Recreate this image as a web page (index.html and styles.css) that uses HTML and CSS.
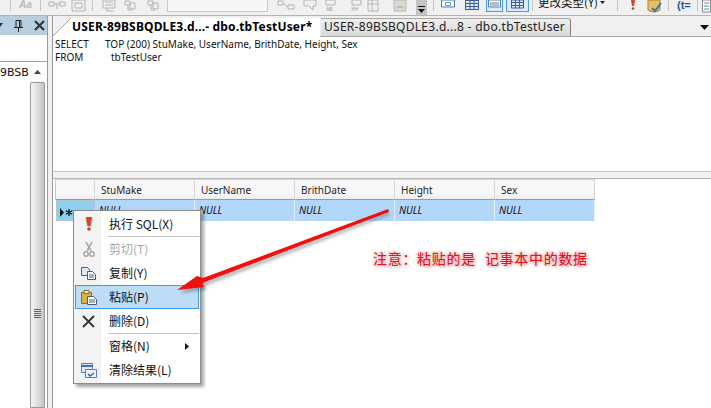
FILE: index.html
```html
<!DOCTYPE html>
<html lang="zh">
<head>
<meta charset="utf-8">
<title>tbTestUser</title>
<link rel="stylesheet" href="styles.css">
</head>
<body>
<div class="app">
  <div class="toolbar">
    <span class="tsep s1"></span>
    <span class="aa">Aa</span>
    <span class="tsep s2"></span>
    <svg class="ticons i1" width="42" height="15" viewBox="0 0 42 15"><g fill="none" stroke="#b4b4b4"><path d="M1 2h5v4H1zM6 4h6M12 2h5v4h-5zM9 4v5"/><path d="M24 0h13v11H24zM27 3h7v5h-7z"/></g></svg>
    <span class="tsep s3"></span>
    <svg class="ticons i2" width="62" height="15" viewBox="0 0 62 15"><g fill="none" stroke="#b4b4b4"><path d="M1 0h12v8H1zM3 2h8M3 5h8M5 8v3h7"/><path d="M23 1h5v4h-5zM28 3h5v6h-5zM26 5v5h4"/><path d="M46 1h5v4h-5zM51 3h5v6h-5zM49 5v5h4"/></g></svg>
    <span class="combo"></span>
    <svg class="ticons i3" width="134" height="15" viewBox="0 0 134 15"><g fill="none" stroke="#b4b4b4"><path d="M1 1h5v4H1zM6 3l5 4M11 5h6v4h-6z"/><path d="M27 0h12v6h-3v4l-4-4h-5z"/><path d="M49 0h9v5h-9z"/><path d="M75 0h9v5h-9z"/><path d="M91 0h10v11H91zM91 4h10M95 0v11"/><path d="M117 0h12v11h-12z" fill="#d8d8d0"/><path d="M120 7h6" stroke="#8a8"/></g><text x="49" y="11" class="mini">AB</text><text x="74" y="11" class="mini">XH</text></svg>
    <span class="grip"><svg width="7" height="7" viewBox="0 0 7 7"><path d="M0 0h7v1H0zM0 3h7L3.500 7z" fill="#111"/></svg></span>
    <span class="tsep s4"></span>
    <span class="tbtn b1"><svg width="14" height="11" viewBox="0 0 14 11"><path d="M.5 0h13v7H.5z" fill="#fff" stroke="#4a7fc0"/><path d="M4.500 2.500h5v3h-5z" fill="none" stroke="#6a9ad0"/></svg></span>
    <span class="tbtn b2"><svg width="14" height="11" viewBox="0 0 14 11"><path d="M.5.500h13v9H.5z" fill="#dde6f3" stroke="#3a5f9f"/><path d="M.5 3.500h13M.5 6.500h13M5 .500v9M9 .500v9" stroke="#3a5f9f"/></svg></span>
    <span class="tbtn b3"><svg width="13" height="10" viewBox="0 0 13 10"><path d="M.5 0h12v7H.5z" fill="#fff" stroke="#4a7fc0"/><path d="M2 3h9M2 5h9" stroke="#777"/></svg></span>
    <span class="tbtn b4"><svg width="13" height="10" viewBox="0 0 13 10"><path d="M.5 0h12v8H.5z" fill="#dde6f3" stroke="#3a5f9f"/><path d="M.5 2.500h12M.5 5.500h12M4.500 0v8M8.500 0v8" stroke="#3a5f9f"/></svg></span>
    <span class="tsep s5"></span>
    <span class="ctype">更改类型(Y)<svg class="drop" width="5" height="3" viewBox="0 0 5 3"><path d="M0 0h5L2.500 3z" fill="#222"/></svg></span>
    <span class="tsep s6"></span>
    <svg class="bang" width="6" height="10" viewBox="0 0 6 10"><path d="M1 0h4L4 6H2z" fill="#d8402a"/><circle cx="3" cy="8.500" r="1.300" fill="#b8402a"/></svg>
    <svg class="sqlv" width="16" height="15" viewBox="0 0 16 15"><path d="M1 0h12v10q-6 4-12 0z" fill="#e8c060" stroke="#a88030"/><path d="M5 8l3 3 6-8" fill="none" stroke="#3a70c0" stroke-width="2"/></svg>
    <span class="tsep s7"></span>
    <span class="paren">(t=</span>
    <span class="tsep s8"></span>
    <svg class="doc" width="9" height="13" viewBox="0 0 9 13"><path d="M.5 0h8v12h-8z" fill="#fff" stroke="#888"/><path d="M2 3h5M2 6h5M2 9h5" stroke="#4a90b0"/></svg>
  </div>
  <div class="main">
    <aside class="left">
      <div class="lhead">
        <svg class="ldrop" width="3" height="6" viewBox="0 0 3 6"><path d="M0 0h3L0 4z" fill="#333"/></svg>
        <svg class="pin" width="11" height="12" viewBox="0 0 11 12"><path d="M3 .500h5v7H3zM6.500 1v6M1 7.500h9M5.500 8v4" fill="none" stroke="#222"/></svg>
        <svg class="close" width="11" height="11" viewBox="0 0 11 11"><path d="M1 1l9 9M10 1l-9 9" stroke="#333" stroke-width="2.200"/></svg>
      </div>
      <div class="ltool"></div>
      <div class="ltree">
        <div class="treetext">9BSB</div>
        <div class="vscroll">
          <div class="sbtn"><svg width="7" height="4" viewBox="0 0 7 4"><path d="M0 4l3.500-4 3.500 4z" fill="#444"/></svg></div>
          <div class="thumb"><div class="gripv"></div></div>
        </div>
      </div>
    </aside>
    <div class="split"></div>
    <section class="doc-area">
      <div class="tabs">
        <div class="tab active"><svg class="slant" width="19" height="18" viewBox="0 0 19 18"><path d="M0 18L18 0H0z" fill="#f0f0f0"/><path d="M0 18L18 0" stroke="#a8a8a8" fill="none"/></svg>USER-89BSBQDLE3.d...- dbo.tbTestUser*</div>
        <div class="tab other">USER-89BSBQDLE3.d...8 - dbo.tbTestUser</div>
        <svg class="tabdrop" width="9" height="5" viewBox="0 0 9 5"><path d="M0 0h9L4.500 5z" fill="#111"/></svg>
      </div>
      <div class="sql">
        <div class="sqlrow"><span class="kw">SELECT</span><span>TOP (200) StuMake, UserName, BrithDate, Height, Sex</span></div>
        <div class="sqlrow"><span class="kw">FROM</span><span class="from">tbTestUser</span></div>
      </div>
      <div class="hsplit"></div>
      <div class="results">
        <div class="grid">
          <div class="gh corner"></div>
          <div class="gh">StuMake</div>
          <div class="gh">UserName</div>
          <div class="gh">BrithDate</div>
          <div class="gh">Height</div>
          <div class="gh">Sex</div>
          <div class="selector"><svg width="15" height="9" viewBox="0 0 15 9"><path d="M0 0l4 4.500L0 9z" fill="#111"/><path d="M9 1v7M5.800 2.800l6.400 3.400M12.200 2.800L5.800 6.200" stroke="#111" stroke-width="1.300"/></svg></div>
          <div class="gc">NULL</div>
          <div class="gc">NULL</div>
          <div class="gc">NULL</div>
          <div class="gc">NULL</div>
          <div class="gc">NULL</div>
        </div>
      </div>
    </section>
  </div>
  <div class="menu">
    <div class="mi"><span class="mic"><svg width="8" height="14" viewBox="0 0 8 14"><path d="M1 0h6L5.500 9h-3z" fill="#d9452c" stroke="#b5651d" stroke-width=".6"/><circle cx="4" cy="12" r="1.800" fill="#c9452c"/></svg></span><span class="ml">执行 SQL(X)</span></div>
    <div class="msep"></div>
    <div class="mi dis"><span class="mic"><svg width="12" height="15" viewBox="0 0 12 15"><path d="M3 0l5 9M9 0L4 9" stroke="#aaa" stroke-width="1.600"/><circle cx="3" cy="12" r="2.200" fill="none" stroke="#aaa" stroke-width="1.500"/><circle cx="9" cy="12" r="2.200" fill="none" stroke="#aaa" stroke-width="1.500"/></svg></span><span class="ml">剪切(T)</span></div>
    <div class="mi"><span class="mic"><svg width="15" height="13" viewBox="0 0 15 13"><path d="M.5.500h6l2 2v6H.5z" fill="#dfe8f6" stroke="#3f5f9f"/><path d="M6.500 4.500h5l3 3v5h-8z" fill="#fff" stroke="#3f5f9f"/><path d="M8 8h5M8 10h5" stroke="#3f5f9f"/></svg></span><span class="ml">复制(Y)</span></div>
    <div class="mi hover"><span class="mic"><svg width="16" height="15" viewBox="0 0 16 15"><path d="M.5 2.500h10v11H.5z" fill="#d9b04a" stroke="#8c6d1f"/><path d="M3 .500h5v3H3z" fill="#e9e2c0" stroke="#8c6d1f"/><path d="M6.500 6.500h6l3 3v5h-9z" fill="#fff" stroke="#505a70"/><path d="M8 10h6M8 12h6" stroke="#505a70"/></svg></span><span class="ml">粘贴(P)</span></div>
    <div class="mi"><span class="mic"><svg width="13" height="13" viewBox="0 0 13 13"><path d="M1 1l11 11M12 1L1 12" stroke="#333" stroke-width="1.800"/></svg></span><span class="ml">删除(D)</span></div>
    <div class="msep"></div>
    <div class="mi"><span class="mic"></span><span class="ml">窗格(N)</span><svg class="marrow" width="4" height="7" viewBox="0 0 4 7"><path d="M0 0l4 3.500L0 7z" fill="#111"/></svg></div>
    <div class="mi"><span class="mic"><svg width="16" height="15" viewBox="0 0 16 15"><path d="M.5.500h11v9H.5z" fill="#dfe8f6" stroke="#5a7fb5"/><path d="M.5 3h11" stroke="#3f6fbf" stroke-width="2"/><path d="M4.500 6.500h11v8h-11z" fill="#eef3fa" stroke="#5a7fb5"/><path d="M7 11l2 2 4-3" fill="none" stroke="#2a66b8" stroke-width="1.400"/></svg></span><span class="ml">清除结果(L)</span></div>
  </div>
  <svg class="arrow" width="240" height="100" viewBox="0 0 240 100">
    <path class="ashadow" d="M216 7L32 76l-7-2L7 88l27-3-2-4L217 10z"/>
    <path class="ahead" d="M215 4L30 73l-6-2L4 85l27-3-2-4L216 7z"/>
  </svg>
  <div class="note"><span>注意：粘贴的是</span><span class="n2">记事本中的数据</span></div>
</div>
</body>
</html>
```

FILE: styles.css
```css
* { box-sizing: border-box; }
html, body { margin: 0; padding: 0; }
body { width: 711px; height: 408px; overflow: hidden; background: #f0f0f0; font-family: "Noto Sans", "Noto Sans CJK SC", sans-serif; }
.app { position: relative; width: 711px; height: 408px; overflow: hidden; display: flex; flex-direction: column; }

.toolbar { height: 16px; flex: none; display: flex; align-items: flex-start; background: #f0f0f0; border-bottom: 1px solid #b5b5b5; overflow: hidden; }
.tsep { flex: none; width: 1px; height: 11px; background: #c6c6c6; }
.s1 { margin-left: 10px; }
.aa { flex: none; width: 15px; margin-left: 8px; font: italic bold 10px/10px "Liberation Sans", sans-serif; color: #b8b8b8; }
.s2 { margin-left: 6px; }
.i1 { margin-left: 7px; flex: none; }
.s3 { margin-left: 2px; }
.i2 { margin-left: 9px; flex: none; }
.combo { width: 101px; height: 12px; margin-left: 3px; flex: none; background: #f6f6f6; border: 1px solid #c8c8c8; border-top: 0; }
.i3 { margin-left: 9px; flex: none; }
.mini { font: 5px "Liberation Sans", sans-serif; fill: #999; }
.grip { width: 11px; height: 15px; margin-left: 5px; flex: none; background: #c4c4c4; padding: 6px 0 0 2px; }
.grip svg { display: block; }
.s4 { margin-left: 6px; }
.tbtn { flex: none; height: 12px; display: flex; justify-content: center; border: 1px solid #4a9ce8; border-top: 0; background: #dcebfb; overflow: hidden; }
.b1 { width: 16px; margin-left: 6px; background: #f0f0f0; border: 0; }
.b2 { width: 16px; margin-left: 8px; background: #f0f0f0; border: 0; }
.b3 { width: 17px; margin-left: 6px; }
.b4 { width: 23px; margin-left: 3px; }
.s5 { margin-left: 3px; }
.ctype { flex: none; display: flex; align-items: center; width: 78px; margin-left: 5px; font: 11.500px/12px "Noto Sans CJK SC", sans-serif; color: #111; margin-top: -4px; white-space: nowrap; }
.drop { flex: none; margin-left: 2px; }
.s6 { margin-left: 1px; }
.bang { margin-left: 12px; flex: none; }
.sqlv { margin-left: 11px; flex: none; }
.s7 { margin-left: 5px; }
.paren { flex: none; width: 17px; margin-left: 8px; font: bold 11px/10px "Liberation Sans", sans-serif; color: #2255a0; }
.s8 { margin-left: 3px; }
.doc { margin-left: 4px; flex: none; }

.main { flex: 1; display: flex; min-height: 0; background: #f0f0f0; }
.left { width: 48px; flex: none; display: flex; flex-direction: column; background: #fff; border-right: 1px solid #9a9a9a; }
.lhead { height: 19px; flex: none; display: flex; align-items: center; gap: 10px; padding-right: 6px; background: #b8cddd; }
.ldrop { flex: none; margin-right: auto; }
.pin { flex: none; }
.close { flex: none; }
.ltool { height: 27px; flex: none; background: #fff; border-bottom: 1px solid #a0a0a0; }
.ltree { flex: 1; display: flex; min-height: 0; background: #fff; }
.treetext { width: 30px; flex: none; font: 11px/22px "DejaVu Sans", sans-serif; color: #111; white-space: nowrap; }
.vscroll { width: 15px; flex: none; display: flex; flex-direction: column; gap: 1px; background: #f3f3f3; }
.sbtn { height: 19px; flex: none; display: flex; align-items: center; justify-content: center; background: #fff; }
.thumb { flex: 1; display: flex; align-items: flex-start; justify-content: center; padding-top: 226px; background: linear-gradient(90deg, #f4f4f4, #e8e8e8 30%, #c4c4c4); border: 1px solid #999; border-radius: 2px 2px 0 0; }
.gripv { width: 7px; height: 9px; flex: none; background: repeating-linear-gradient(#666 0 1px, #ddd 1px 2px); }
.split { width: 4px; flex: none; background: #f0f0f0; }

.doc-area { flex: 1; min-width: 0; display: flex; flex-direction: column; background: #fff; border-left: 1px solid #9a9a9a; }
.tabs { height: 21px; flex: none; display: flex; align-items: flex-end; position: relative; background: #f0f0f0; border-bottom: 1px solid #a8a8a8; }
.tab { flex: none; white-space: nowrap; color: #222; }
.active { position: relative; width: 267px; height: 19px; margin-bottom: -1px; padding-left: 19px; background: #fff; font: bold 12px/17px "Noto Sans", sans-serif; letter-spacing: .16px; color: #000; }
.slant { position: absolute; left: 0; top: 0; }
.other { width: 250px; height: 18px; margin-left: 1px; padding-left: 3px; background: linear-gradient(#efefef, #d9d9d9); border: 1px solid #a8a8a8; border-bottom: 0; border-left: 0; border-right-color: #808080; border-radius: 0 3px 0 0; font: 12px/16px "Noto Sans", sans-serif; letter-spacing: .28px; }
.tabdrop { position: absolute; right: 2px; top: 9px; }
.sql { height: 134px; flex: none; padding: 1px 0 0 2px; font: 10px/13px "Noto Sans", sans-serif; color: #111; background: #fff; }
.sqlrow { display: flex; }
.kw { width: 50px; flex: none; }
.from { margin-left: 6px; }
.hsplit { height: 8px; flex: none; background: #f2f2f2; border-top: 1px solid #c8c8c8; border-bottom: 1px solid #b5b5b5; }
.results { flex: 1; padding: 0 0 0 2px; background: #fff; }
.grid { display: grid; grid-template-columns: 40px repeat(5, 100px); grid-template-rows: 21px 21px; width: 540px; }
.gh { font: 10px/20px "Noto Sans", sans-serif; color: #222; padding-left: 6px; background: linear-gradient(#f7f7f7 0 70%, #ededed); border-right: 1px solid #d6d6d6; border-bottom: 1px solid #9a9a9a; border-top: 1px solid #d8d8d8; }
.corner { border-left: 1px solid #c8c8c8; }
.selector { background: #8fd0f2; border: 1px solid #b4c8d8; margin-left: 1px; padding: 7px 0 0 3px; }
.selector svg { display: block; }
.gc { background: #b3d7fb; border-right: 1px solid #e4f0fc; font: italic 10px/21px "Noto Sans", sans-serif; padding-left: 4px; color: #111; }

.menu { position: absolute; left: 73px; top: 210px; width: 128px; padding: 1px; display: flex; flex-direction: column; background: linear-gradient(90deg, #f3f3f3 0 27px, #fff 27px); border: 1px solid #8c8c8c; box-shadow: 3px 3px 3px rgba(0,0,0,.35); font: 12px "Noto Sans CJK SC", sans-serif; color: #111; }
.mi { height: 24px; flex: none; display: flex; align-items: center; position: relative; border: 1px solid transparent; }
.mic { width: 25px; flex: none; display: flex; justify-content: center; }
.ml { margin-left: 8px; padding-bottom: 2px; white-space: nowrap; }
.dis { color: #a8a8a8; }
.hover { background: #bcdcf8; border-color: #3f9cf0; }
.msep { height: 1px; flex: none; margin-left: 33px; background: #c4c4c4; }
.marrow { position: absolute; right: 9px; top: 8px; }

.arrow { position: absolute; left: 173px; top: 205px; }
.ahead { fill: #f01010; }
.ashadow { fill: rgba(60,60,60,.35); filter: blur(1.500px); }
.note { position: absolute; left: 373px; top: 248px; display: flex; gap: 9px; font: 500 14px/20px "Noto Sans CJK SC", sans-serif; letter-spacing: .7px; color: #e8141c; white-space: nowrap; text-shadow: 0 0 1px #fff, 0 0 2px #fff, 1px 1px 3px rgba(190,110,110,.8), -1px -1px 3px rgba(190,110,110,.5); }
```
